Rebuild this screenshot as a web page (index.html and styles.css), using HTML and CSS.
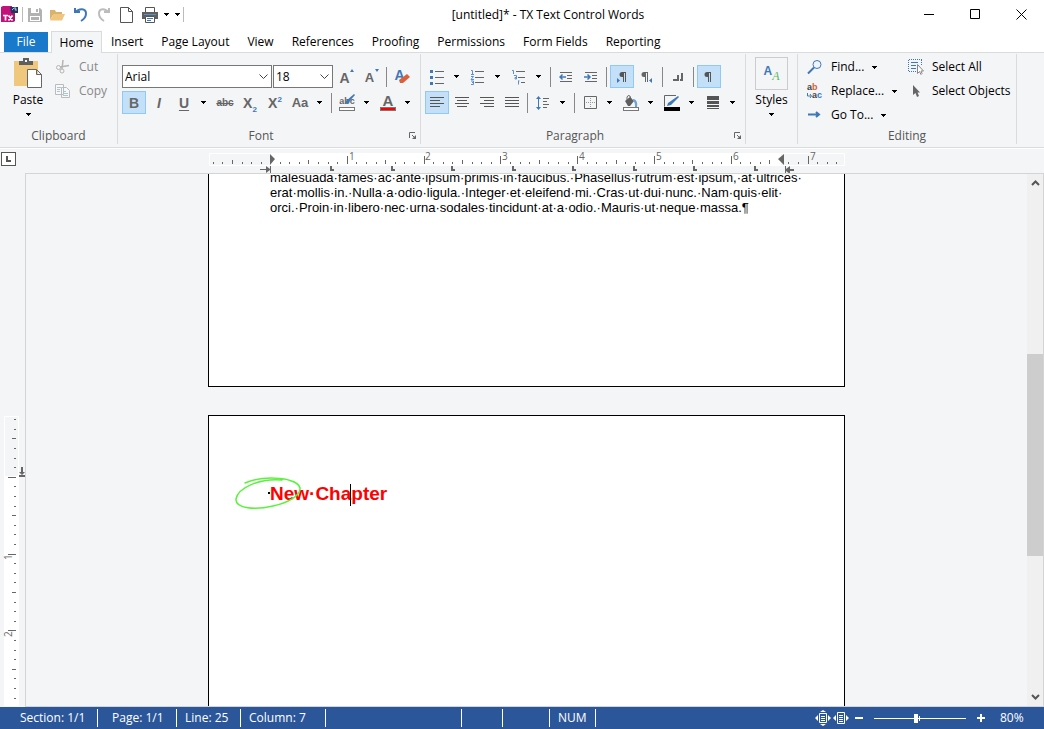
FILE: index.html
```
<!DOCTYPE html>
<html lang="en">
<head>
    <meta charset="UTF-8">
    <title>[untitled]* - TX Text Control Words</title>
    <link rel="stylesheet" href="styles.css">
</head>
<body>
<svg class="defs" aria-hidden="true">
    <symbol id="arrow" viewBox="0 0 5 3"><path d="M0 0h5v1h-1v1h-1v1h-1v-1h-1v-1h-1z"/></symbol>
    <symbol id="chevron" viewBox="0 0 9 6"><path d="M.5 .5l4 4 4-4" fill="none" stroke="#444"/></symbol>
    <symbol id="launcher" viewBox="0 0 8 8"><path d="M.5 6V.5H6M3 3l3 3" fill="none" stroke="#666"/><path d="M7 3v4H3z" fill="#666"/></symbol>
    <symbol id="tabstop" viewBox="0 0 4 5"><path d="M0 0h2v3h2v2H0z" fill="#666"/></symbol>
</svg>

<header class="titlebar">
    <div class="quick">
        <svg class="logo" width="17" height="17" viewBox="0 0 17 17">
            <path d="M0 1l2-1h9v6h3v9l-2 1H0z" fill="#c5117c"/><path d="M11 6l3 0v9l-3 1z" fill="#9b1c66"/>
            <path d="M9 1h8v6h-7z" fill="#23355c"/><path d="M11 4l2-2h2l-1 2h2" fill="none" stroke="#9ec3e8"/>
            <path d="M2 9.500h5M4.500 9.500v5M7.500 9.500l4 5M11.500 9.500l-4 5" stroke="#fff" stroke-width="1.700" fill="none"/>
        </svg>
        <span class="vline"></span>
        <button class="qbtn" aria-label="Save"><svg width="14" height="14" viewBox="0 0 14 14"><path d="M0 0h12l2 2v12H0z" fill="#b2b2b2"/><path d="M3 0h8v5H3zM2 8h10v5H2z" fill="#fff"/><path d="M8 1h2v3H8zM3 9h8v3H3z" fill="#b2b2b2"/></svg></button>
        <button class="qbtn" aria-label="Open"><svg width="15" height="12" viewBox="0 0 15 12"><path d="M0 1h5l1 2h6v3H3l-3 5z" fill="#d9b36c"/><path d="M3.500 5H15l-3 6.500H0z" fill="#f0c67e"/></svg></button>
        <button class="qbtn" aria-label="Undo"><svg width="14" height="15" viewBox="0 0 14 15"><path d="M1 5.500C5 1 12 1 12 6.500c0 4-2.500 6-5 7.500" fill="none" stroke="#3f78b8" stroke-width="2"/><path d="M0 1h2v3h4v2H0z" fill="#3f78b8"/></svg></button>
        <button class="qbtn" aria-label="Redo"><svg width="14" height="15" viewBox="0 0 14 15"><path d="M12 5.500C8 1 2 1 2 6.500c0 4 2.500 6 5 7.500" fill="none" stroke="#bcbcbc" stroke-width="2"/><path d="M13 1h-2v3H7v2h6z" fill="#bcbcbc"/></svg></button>
        <button class="qbtn" aria-label="New"><svg width="13" height="16" viewBox="0 0 13 16"><path d="M.5 .5h8l4 4v11H.5zM8.500 .5v4h4" fill="#fff" stroke="#555"/></svg></button>
        <button class="qbtn" aria-label="Print"><svg width="16" height="16" viewBox="0 0 16 16"><path d="M3.500 5V.5h9V5" fill="#fff" stroke="#555"/><path d="M0 5h16v7H0z" fill="#606060"/><path d="M2 7h12v1H2z" fill="#5c90c8"/><path d="M3.500 9.500h9v6h-9z" fill="#fff" stroke="#555"/><path d="M5 11.500h6M5 13.500h4" stroke="#3f78b8"/></svg></button>
        <button class="drop narrow" aria-label="Print options"><svg class="arrow"><use href="#arrow"/></svg></button>
        <button class="drop narrow" aria-label="Customize toolbar"><svg class="arrow"><use href="#arrow"/></svg></button>
        <span class="vline"></span>
    </div>
    <h1 class="title">[untitled]* - TX Text Control Words</h1>
    <div class="window-buttons">
        <button aria-label="Minimize"><svg width="11" height="11"><path d="M0 5.500h10" stroke="#000"/></svg></button>
        <button aria-label="Maximize"><svg width="11" height="11"><path d="M.5 .5h9v9h-9z" fill="none" stroke="#000"/></svg></button>
        <button aria-label="Close"><svg width="11" height="11"><path d="M.5 .5l10 10M10.500 .5l-10 10" stroke="#000"/></svg></button>
    </div>
</header>

<nav class="tabs">
    <button class="tab file">File</button>
    <button class="tab active">Home</button>
    <button class="tab">Insert</button>
    <button class="tab">Page Layout</button>
    <button class="tab">View</button>
    <button class="tab">References</button>
    <button class="tab">Proofing</button>
    <button class="tab">Permissions</button>
    <button class="tab">Form Fields</button>
    <button class="tab">Reporting</button>
</nav>

<div class="ribbon">
    <section class="group clipboard">
        <div class="group-body">
            <button class="big">
                <svg width="28" height="30" viewBox="0 0 28 30"><path d="M0 3h24v25H0z" fill="#efc77d"/><path d="M5 3h4V0h6v3h4v4H5z" fill="#5f5f5f"/><path d="M11 2h2v2h-2z" fill="#f4f5f7"/><path d="M13.500 11.500h9l5 5v13h-14zM22.500 11.500v5h5" fill="#fff" stroke="#666"/></svg>
                Paste
                <svg class="arrow"><use href="#arrow"/></svg>
            </button>
            <div class="stack">
                <button class="item off"><svg width="16" height="16" viewBox="0 0 16 16"><path d="M8 1l-1 9M14 6.500L5 8" stroke="#b4b4b4" stroke-width="1.500"/><circle cx="3.500" cy="8.500" r="2" fill="none" stroke="#b4b4b4"/><circle cx="7" cy="12" r="2" fill="none" stroke="#b4b4b4"/></svg>Cut</button>
                <button class="item off"><svg width="16" height="16" viewBox="0 0 16 16"><path d="M.5 1.500h8v10h-8zM6.500 4.500h5l3 3v7h-8z" fill="#f8f8f8" stroke="#bbb"/><path d="M2 4.500h4M2 6.500h3M2 8.500h3M8 8.500h3M8 10.500h5M8 12.500h5" stroke="#a9c4dd"/></svg>Copy</button>
            </div>
        </div>
        <div class="group-name">Clipboard</div>
    </section>

    <section class="group font">
        <div class="group-body rows">
            <div class="row">
                <span class="combo family"><select aria-label="Font"><option>Arial</option></select><svg class="chevron"><use href="#chevron"/></svg></span>
                <span class="combo size"><select aria-label="Font size"><option>18</option></select><svg class="chevron"><use href="#chevron"/></svg></span>
                <button class="tool" aria-label="Grow font"><span class="glyph grow">A</span><svg class="caret-mark" viewBox="0 0 4 3"><path d="M2 0l2 3H0z" fill="#3f78b8"/></svg></button>
                <button class="tool" aria-label="Shrink font"><span class="glyph small grow">A</span><svg class="caret-mark" viewBox="0 0 4 3"><path d="M0 0h4L2 3z" fill="#3f78b8"/></svg></button>
                <span class="sep"></span>
                <button class="tool" aria-label="Clear formatting"><span class="glyph blue">A</span><svg class="eraser" viewBox="0 0 11 10"><path d="M8 0l3 3-7 6H1L0 6z" fill="#d9603b"/></svg></button>
            </div>
            <div class="row">
                <button class="tool on" aria-label="Bold"><span class="glyph">B</span></button>
                <button class="tool" aria-label="Italic"><span class="glyph italic">I</span></button>
                <button class="tool" aria-label="Underline"><span class="glyph under">U</span></button>
                <button class="drop" aria-label="Underline style"><svg class="arrow"><use href="#arrow"/></svg></button>
                <button class="tool" aria-label="Strikethrough"><span class="glyph strike">abc</span></button>
                <button class="tool" aria-label="Subscript"><span class="glyph">X<sub>2</sub></span></button>
                <button class="tool" aria-label="Superscript"><span class="glyph">X<sup>2</sup></span></button>
                <button class="tool" aria-label="Change case"><span class="glyph small">Aa</span></button>
                <button class="drop" aria-label="Case options"><svg class="arrow"><use href="#arrow"/></svg></button>
                <span class="sep"></span>
                <button class="tool column" aria-label="Highlight"><span class="glyph tiny">abc</span><svg class="pen" viewBox="0 0 11 11"><path d="M1 10l1-3 8-7 1 1-7 8z" fill="#3f78b8"/></svg><span class="swatch"></span></button>
                <button class="drop" aria-label="Highlight color"><svg class="arrow"><use href="#arrow"/></svg></button>
                <button class="tool column" aria-label="Font color"><span class="glyph over">A</span><span class="swatch red"></span></button>
                <button class="drop" aria-label="Pick font color"><svg class="arrow"><use href="#arrow"/></svg></button>
            </div>
        </div>
        <div class="group-name">Font<button class="launch" aria-label="Font dialog"><svg width="8" height="8"><use href="#launcher"/></svg></button></div>
    </section>

    <section class="group paragraph">
        <div class="group-body rows">
            <div class="row">
                <button class="tool" aria-label="Bullets"><svg width="16" height="16" viewBox="0 0 16 16"><path d="M6 2.500h9M6 8.500h9M6 14.500h9" stroke="#666"/><path d="M1 1h3v3H1zM1 7h3v3H1zM1 13h3v3H1z" fill="#3f78b8"/></svg></button>
                <button class="drop" aria-label="Bullet styles"><svg class="arrow"><use href="#arrow"/></svg></button>
                <button class="tool" aria-label="Numbering"><svg width="16" height="16" viewBox="0 0 16 16"><path d="M5 2.500h9M5 8.500h9M5 13.500h9" stroke="#666"/><path d="M1 1.500h1.500V5M1 5.500h3M1 7.500h2.500L1 10.500h3M1 12h2.500v3.500H1M2 13.500h2" fill="none" stroke="#5c90c8"/></svg></button>
                <button class="drop" aria-label="Numbering styles"><svg class="arrow"><use href="#arrow"/></svg></button>
                <button class="tool" aria-label="Multilevel list"><svg width="16" height="16" viewBox="0 0 16 16"><path d="M5 2.500h9M7 8.500h7M10 13.500h4" stroke="#666"/><path d="M1 1.500h1.500V5M3 6.500h2.500V10H4V8.500h2M7.500 11.500v4M7.500 12h1" fill="none" stroke="#5c90c8"/></svg></button>
                <button class="drop" aria-label="Multilevel styles"><svg class="arrow"><use href="#arrow"/></svg></button>
                <span class="sep"></span>
                <button class="tool" aria-label="Decrease indent"><svg width="14" height="14" viewBox="0 0 14 14"><path d="M1 2.500h12M8 5.500h5M8 8.500h5M1 11.500h12" stroke="#666"/><path d="M1 7h6M3.500 4.500L1 7l2.500 2.500" fill="none" stroke="#3f78b8" stroke-width="1.500"/></svg></button>
                <button class="tool" aria-label="Increase indent"><svg width="14" height="14" viewBox="0 0 14 14"><path d="M1 2.500h12M8 5.500h5M8 8.500h5M1 11.500h12" stroke="#666"/><path d="M0 7h6M3.500 4.500L6 7 3.500 9.500" fill="none" stroke="#3f78b8" stroke-width="1.500"/></svg></button>
                <span class="sep"></span>
                <button class="tool on" aria-label="Left to right"><svg width="12" height="12" viewBox="0 0 12 12"><path d="M9 1H6a2.500 2.500 0 000 5h1v5h1V2h1v9h1V1z" fill="#555"/><path d="M1 7v5l3-2.500z" fill="#3f78b8"/></svg></button>
                <button class="tool" aria-label="Right to left"><svg width="12" height="12" viewBox="0 0 12 12"><path d="M6 1H3a2.500 2.500 0 000 5h1v5h1V2h1v9h1V1z" fill="#666"/><path d="M11 7v5L8 9.500z" fill="#3f78b8"/></svg></button>
                <span class="sep"></span>
                <button class="tool" aria-label="Tabs"><svg width="12" height="12" viewBox="0 0 12 12"><path d="M1 8h4V4h2v6H1zM9 2h2v8H8V8h1z" fill="#666"/></svg></button>
                <span class="sep"></span>
                <button class="tool on" aria-label="Show control characters"><svg width="12" height="12" viewBox="0 0 12 12"><path d="M7 1H4a2.500 2.500 0 000 5h1v5h1V2h1v9h1V1z" fill="#555"/></svg></button>
            </div>
            <div class="row">
                <button class="tool on" aria-label="Align left"><svg width="14" height="11" viewBox="0 0 14 11"><path d="M0 .5h14M0 3.500h10M0 6.500h14M0 9.500h10" stroke="#555"/></svg></button>
                <button class="tool" aria-label="Center"><svg width="14" height="11" viewBox="0 0 14 11"><path d="M0 .5h14M2 3.500h10M0 6.500h14M2 9.500h10" stroke="#555"/></svg></button>
                <button class="tool" aria-label="Align right"><svg width="14" height="11" viewBox="0 0 14 11"><path d="M0 .5h14M4 3.500h10M0 6.500h14M4 9.500h10" stroke="#555"/></svg></button>
                <button class="tool" aria-label="Justify"><svg width="14" height="11" viewBox="0 0 14 11"><path d="M0 .5h14M0 3.500h14M0 6.500h14M0 9.500h14" stroke="#555"/></svg></button>
                <span class="sep"></span>
                <button class="tool" aria-label="Line spacing"><svg width="14" height="14" viewBox="0 0 14 14"><path d="M7 2.500h6M7 5.500h4M7 8.500h6M7 11.500h4" stroke="#666"/><path d="M2.500 2v10" stroke="#3f78b8"/><path d="M0 3l2.500-3L5 3zM0 11l2.500 3L5 11z" fill="#3f78b8"/></svg></button>
                <button class="drop" aria-label="Spacing options"><svg class="arrow"><use href="#arrow"/></svg></button>
                <span class="sep"></span>
                <button class="tool" aria-label="Borders"><svg width="13" height="13" viewBox="0 0 13 13"><path d="M.5 .5h12v12H.5z" fill="none" stroke="#666"/><path d="M2 6.500h9M6.500 2v9" stroke="#999" stroke-dasharray="1 1"/></svg></button>
                <button class="drop" aria-label="Border options"><svg class="arrow"><use href="#arrow"/></svg></button>
                <button class="tool column" aria-label="Shading"><svg width="14" height="12" viewBox="0 0 14 12"><path d="M1 6l5-4 4 4-4 5H4z" fill="#5f5f5f"/><path d="M3 5V2a2 2 0 013-1l1 3" fill="none" stroke="#666"/><path d="M9 4c3 0 5 3 4 8h-2c0-3 0-5-2-6z" fill="#6fa3d6"/></svg><span class="swatch"></span></button>
                <button class="drop" aria-label="Shading color"><svg class="arrow"><use href="#arrow"/></svg></button>
                <button class="tool column" aria-label="Frame line"><svg width="16" height="12" viewBox="0 0 16 12"><path d="M12 .5H.5V11.500" fill="none" stroke="#666"/><path d="M3 11l1-3 10-7 1 1-8 8z" fill="#3f78b8"/></svg><span class="swatch black"></span></button>
                <button class="drop" aria-label="Frame line color"><svg class="arrow"><use href="#arrow"/></svg></button>
                <button class="tool" aria-label="Line width"><svg width="12" height="13" viewBox="0 0 12 13"><path d="M0 0h12v4H0zM0 5h12v3H0zM0 9h12v2H0zM0 12h12v1H0z" fill="#555"/></svg></button>
                <button class="drop" aria-label="Line width options"><svg class="arrow"><use href="#arrow"/></svg></button>
            </div>
        </div>
        <div class="group-name">Paragraph<button class="launch" aria-label="Paragraph dialog"><svg width="8" height="8"><use href="#launcher"/></svg></button></div>
    </section>

    <section class="group styles">
        <div class="group-body">
            <button class="big">
                <span class="style-box"><b>A</b><i>A</i></span>
                Styles
                <svg class="arrow"><use href="#arrow"/></svg>
            </button>
        </div>
    </section>

    <section class="group editing">
        <div class="group-body">
            <div class="stack">
                <button class="item"><svg width="16" height="16" viewBox="0 0 16 16"><circle cx="10" cy="5.500" r="4" fill="#eef5fb" stroke="#3f78b8"/><path d="M7 8.500L1 14.500" stroke="#3f78b8" stroke-width="2"/></svg>Find...<svg class="arrow"><use href="#arrow"/></svg></button>
                <button class="item"><span class="replace-icon"><span>a<b>b</b></span><span><svg width="5" height="5" viewBox="0 0 5 5"><path d="M.5 0v3H4M3 1l1.500 2L3 5" fill="none" stroke="#3f78b8"/></svg>a<i>c</i></span></span>Replace...<svg class="arrow"><use href="#arrow"/></svg></button>
                <button class="item"><svg width="16" height="16" viewBox="0 0 16 16"><path d="M1 7.500h10M9 5l3 2.500L9 10" fill="none" stroke="#3f78b8" stroke-width="2"/></svg>Go To...<svg class="arrow"><use href="#arrow"/></svg></button>
            </div>
            <div class="stack">
                <button class="item"><svg width="16" height="16" viewBox="0 0 16 16"><path d="M.5 1v11M1 .5h13M13.500 1v5M1 12.500h8" stroke="#3f78b8" stroke-dasharray="1 1"/><path d="M3 3.500h7M3 6.500h5M3 9.500h5" stroke="#3f78b8"/><path d="M9.500 5.500v9l2-2 1.500 3 1-1-1-2.500h2.500z" fill="#fff" stroke="#888"/></svg>Select All</button>
                <button class="item"><svg width="16" height="16" viewBox="0 0 16 16"><path d="M5 2v10l2.500-2 1.500 4 2-1-1.500-3.500H12z" fill="#666"/></svg>Select Objects</button>
            </div>
        </div>
        <div class="group-name">Editing</div>
    </section>
</div>

<div class="ruler-bar">
    <button class="tab-kind" aria-label="Tab type"><svg width="5" height="6" viewBox="0 0 5 6"><path d="M0 0h2v4h3v2H0z" fill="#555"/></svg></button>
    <div class="ruler-track">
        <svg class="ruler" width="637" height="24" viewBox="208 149 637 24">
            <path d="M209.500 153.500h635v12h-635z" fill="#f4f5f7" stroke="#fff"/>
            <path d="M270 153h511v13H270z" fill="#fff"/>
            <path class="tick" d="M213 162v2M222 162v2M242 162v2M251 162v2M261 162v2M280 162v2M289 162v2M299 162v2M318 162v2M328 162v2M337 162v2M356 162v2M366 162v2M376 162v2M395 162v2M404 162v2M414 162v2M433 162v2M443 162v2M452 162v2M472 162v2M481 162v2M491 162v2M510 162v2M520 162v2M529 162v2M548 162v2M558 162v2M568 162v2M587 162v2M596 162v2M606 162v2M625 162v2M635 162v2M644 162v2M664 162v2M673 162v2M683 162v2M702 162v2M712 162v2M721 162v2M740 162v2M750 162v2M760 162v2M788 162v2M798 162v2M817 162v2M827 162v2M836 162v2"/>
            <path class="tick" d="M232 160v4M308 160v4M385 160v4M462 160v4M539 160v4M616 160v4M692 160v4M769 160v4"/>
            <path class="tick" d="M347 156v8M424 156v8M500 156v8M577 156v8M654 156v8M731 156v8M808 156v8"/>
            <g class="num"><text x="349" y="160">1</text><text x="425" y="160">2</text><text x="502" y="160">3</text><text x="579" y="160">4</text><text x="656" y="160">5</text><text x="733" y="160">6</text><text x="810" y="160">7</text></g>
            <path d="M270 154l5 5-5 6zM784 154l-6 5 6 6z" fill="#666"/>
            <path d="M260 169h6v-3l4 3v-3h1v7h-1v-3l-4 3v-3h-6zM785 166h1v3l4-3v3h4v2h-4v3l-4-3v3h-1z" fill="#666"/>
            <g><use href="#tabstop" x="330" y="166" width="4" height="5"/><use href="#tabstop" x="391" y="166" width="4" height="5"/><use href="#tabstop" x="451" y="166" width="4" height="5"/><use href="#tabstop" x="512" y="166" width="4" height="5"/><use href="#tabstop" x="572" y="166" width="4" height="5"/><use href="#tabstop" x="633" y="166" width="4" height="5"/><use href="#tabstop" x="693" y="166" width="4" height="5"/><use href="#tabstop" x="754" y="166" width="4" height="5"/></g>
        </svg>
    </div>
</div>

<main class="workspace">
    <div class="side-ruler">
        <svg width="25" height="290" viewBox="0 416 25 290">
            <path d="M4.500 416.500h14v289h-14z" fill="#fff" stroke="#fff"/>
            <path d="M5 417h13v59H5z" fill="#f4f5f7"/>
            <path class="tick" d="M14 419.500h2M14 429.500h2M14 448.500h2M14 458.500h2M14 467.500h2M14 486.500h2M14 496.500h2M14 506.500h2M14 525.500h2M14 534.500h2M14 544.500h2M14 563.500h2M14 573.500h2M14 582.500h2M14 602.500h2M14 611.500h2M14 621.500h2M14 640.500h2M14 650.500h2M14 659.500h2M14 678.500h2M14 688.500h2M14 698.500h2"/>
            <path class="tick" d="M12 438.500h4M12 515.500h4M12 592.500h4M12 669.500h4M8 477.500h8M8 554.500h8M8 630.500h8"/>
            <g class="num"><text transform="translate(12 560) rotate(-90)">1</text><text transform="translate(12 637) rotate(-90)">2</text></g>
            <path d="M21 467h2v5h2l-3 3-3-3h2zM19 475h6v2h-6z" fill="#666"/>
        </svg>
    </div>
    <div class="editor">
        <div class="pages">
            <article class="page first">
                <p>malesuada·fames·ac·ante·ipsum·primis·in·faucibus.·Phasellus·rutrum·est·ipsum,·at·ultrices·<br>erat·mollis·in.·Nulla·a·odio·ligula.·Integer·et·eleifend·mi.·Cras·ut·dui·nunc.·Nam·quis·elit·<br>orci.·Proin·in·libero·nec·urna·sodales·tincidunt·at·a·odio.·Mauris·ut·neque·massa.¶</p>
            </article>
            <article class="page second">
                <h2>New·Cha<span class="cursor"></span>pter
                    <svg class="scribble" width="70" height="36" viewBox="0 0 70 36"><path d="M48 4C25 2 4 12 2 23c-1 10 20 11 37 7 14-3 28-10 27-18C64 2 32-2 11 7" fill="none" stroke="#5af23c" stroke-width="1.500" stroke-linecap="round"/><path d="M34 16h2v2h-2z"/></svg>
                </h2>
            </article>
        </div>
        <div class="scrollbar">
            <button aria-label="Scroll up"><svg width="9" height="6" viewBox="0 0 9 6"><path d="M1 5l3.500-3.500L8 5" fill="none" stroke="#555" stroke-width="2"/></svg></button>
            <div class="thumb"></div>
            <button class="down" aria-label="Scroll down"><svg width="9" height="6" viewBox="0 0 9 6"><path d="M1 1l3.500 3.500L8 1" fill="none" stroke="#555" stroke-width="2"/></svg></button>
        </div>
    </div>
</main>

<footer class="statusbar">
    <span class="cell section">Section: 1/1</span>
    <span class="cell page-no">Page: 1/1</span>
    <span class="cell line-no">Line: 25</span>
    <span class="cell col-no">Column: 7</span>
    <span class="cell blank"></span>
    <span class="cell ins"></span>
    <span class="cell caps"></span>
    <span class="cell num-lock">NUM</span>
    <div class="zoom">
        <button aria-label="Fit page"><svg width="16" height="16" viewBox="0 0 16 16"><path d="M4.500 3.500h7v9h-7z" fill="none" stroke="#fff"/><path d="M6 6.500h4M6 8.500h4M6 10.500h4" stroke="#fff"/><path d="M8 0l3 2H5zM8 16l3-2H5zM0 8l3-3v6zM16 8l-3-3v6z" fill="#fff"/></svg></button>
        <button aria-label="Fit width"><svg width="16" height="16" viewBox="0 0 16 16"><path d="M4.500 2.500h7v11h-7z" fill="none" stroke="#fff"/><path d="M6 5.500h4M6 7.500h4M6 9.500h4M6 11.500h4" stroke="#fff"/><path d="M0 8l3-3v6zM16 8l-3-3v6z" fill="#fff"/></svg></button>
        <button aria-label="Zoom out"><svg width="8" height="8"><path d="M0 3h8v2H0z" fill="#fff"/></svg></button>
        <input type="range" min="0" max="100" value="45" aria-label="Zoom">
        <button aria-label="Zoom in"><svg width="8" height="8"><path d="M0 3h3V0h2v3h3v2H5v3H3V5H0z" fill="#fff"/></svg></button>
        <output>80%</output>
    </div>
</footer>
</body>
</html>
```
FILE: styles.css
```
* {
    box-sizing: border-box;
}

body {
    margin: 0;
    height: 100vh;
    display: flex;
    flex-direction: column;
    overflow: hidden;
    background: #fff;
    color: #000;
    font: 12px/16px "Open Sans", "Noto Sans", sans-serif;
}

button {
    margin: 0;
    padding: 0;
    border: 0;
    background: none;
    color: inherit;
    font: inherit;
}

svg {
    display: block;
    flex: none;
}

.defs {
    position: absolute;
    width: 0;
    height: 0;
}

.arrow {
    width: 5px;
    height: 3px;
}

/* title bar */
.titlebar {
    display: grid;
    grid-template-columns: 1fr auto 1fr;
    align-items: center;
    height: 29px;
    flex: none;
}

.quick {
    display: flex;
    align-items: center;
}

.quick .logo {
    margin: 0 4px 0 1px;
}

.qbtn {
    width: 23px;
    height: 22px;
    display: flex;
    align-items: center;
    justify-content: center;
}

.vline {
    width: 1px;
    height: 15px;
    background: #bbb;
}

.title {
    margin: 0;
    padding-left: 52px;
    font-size: 12px;
    font-weight: normal;
}

.window-buttons {
    display: flex;
    justify-content: flex-end;
}

.window-buttons button {
    width: 46px;
    height: 29px;
    display: flex;
    align-items: center;
    justify-content: center;
}

/* tabs */
.tabs {
    display: flex;
    align-items: flex-end;
    height: 24px;
    padding-left: 4px;
    border-bottom: 1px solid #dadbdc;
    flex: none;
}

.tab {
    height: 20px;
    padding: 0 9px;
    white-space: nowrap;
}

.tab.file {
    width: 44px;
    margin-right: 3px;
    background: #1979ca;
    color: #fff;
}

.tab.active {
    height: 22px;
    width: 51px;
    padding: 0;
    margin-bottom: -1px;
    border: 1px solid #dadbdc;
    border-bottom: 0;
    background: #f4f5f7;
}

/* ribbon */
.ribbon {
    display: flex;
    height: 95px;
    background: #f4f5f7;
    border-bottom: 1px solid #dadbdc;
    flex: none;
}

.group {
    display: flex;
    flex-direction: column;
    justify-content: space-between;
    margin: 1px 0 3px;
    padding: 0 4px;
    border-right: 1px solid #dadbdc;
}

.clipboard {
    width: 118px;
}

.font {
    width: 303px;
}

.paragraph {
    width: 325px;
}

.styles {
    width: 52px;
}

.editing {
    width: 219px;
}

.group-body {
    display: flex;
}

.group-body.rows {
    flex-direction: column;
    gap: 3px;
    padding-top: 11px;
}

.group-name {
    position: relative;
    text-align: center;
    color: #555;
}

.font .group-name,
.paragraph .group-name {
    padding-right: 16px;
}

.launch {
    position: absolute;
    right: -1px;
    bottom: 4px;
}

.row {
    display: flex;
    align-items: center;
    gap: 1px;
    height: 23px;
}

.tool {
    position: relative;
    width: 24px;
    height: 23px;
    display: flex;
    align-items: center;
    justify-content: center;
}

.tool.column {
    flex-direction: column;
}

.tool.on {
    background: #c4e0f8;
    border: 1px solid #90c8f6;
}

.drop {
    width: 15px;
    height: 23px;
    padding-right: 2px;
    display: flex;
    align-items: center;
    justify-content: center;
}

.drop.narrow {
    width: 11px;
    padding: 0;
}

.sep {
    width: 1px;
    height: 20px;
    margin: 0 2px;
    background: #888;
}

.combo {
    position: relative;
    height: 23px;
}

.family {
    width: 150px;
}

.size {
    width: 60px;
}

.combo select {
    width: 100%;
    height: 23px;
    padding: 0 2px;
    appearance: none;
    border: 1px solid #777;
    border-radius: 0;
    background: #fff;
    color: #000;
    font: inherit;
}

.chevron {
    position: absolute;
    right: 4px;
    top: 9px;
    width: 9px;
    height: 6px;
    pointer-events: none;
}

.glyph {
    color: #666;
    font: bold 14px/14px "Liberation Sans", Arial, sans-serif;
}

.glyph.small {
    font-size: 13px;
}

.glyph.grow {
    padding: 2px 3px 0 0;
}

.glyph.italic {
    font-style: italic;
}

.glyph.under {
    text-decoration: underline;
    text-underline-offset: 2px;
}

.glyph.strike {
    font-size: 10px;
    text-decoration: line-through;
}

.glyph.tiny {
    font-size: 9px;
    line-height: 12px;
}

.glyph.over {
    font-size: 15px;
    line-height: 13px;
}

.glyph.blue {
    color: #3f78b8;
    padding: 0 5px 3px 0;
}

.glyph sub,
.glyph sup {
    color: #3f78b8;
    font-size: 8px;
    line-height: 0;
}

.caret-mark {
    position: absolute;
    right: 4px;
    top: 4px;
    width: 4px;
    height: 3px;
}

.eraser {
    position: absolute;
    right: 4px;
    bottom: 4px;
    width: 11px;
    height: 10px;
}

.pen {
    position: absolute;
    right: 4px;
    top: 3px;
    width: 11px;
    height: 11px;
}

.swatch {
    width: 16px;
    height: 4px;
    border: 1px solid #777;
    background: #fff;
}

.swatch.red {
    background: #f00;
}

.swatch.black {
    background: #000;
    border-color: #000;
}

.big {
    display: flex;
    flex-direction: column;
    align-items: center;
    width: 48px;
    padding-top: 4px;
}

.big svg:first-child {
    margin-bottom: 4px;
}

.big .arrow {
    margin-top: 5px;
}

.stack {
    display: flex;
    flex-direction: column;
    padding-top: 1px;
}

.item {
    display: flex;
    align-items: center;
    gap: 8px;
    height: 24px;
    white-space: nowrap;
}

.item.off {
    color: #888;
}

.clipboard .stack {
    padding-left: 3px;
}

.editing .stack {
    width: 101px;
    padding-left: 5px;
}

.replace-icon {
    width: 16px;
    font: bold 9px/8px "Liberation Sans", Arial, sans-serif;
    color: #444;
    text-align: left;
}

.replace-icon span {
    display: flex;
    align-items: center;
}

.replace-icon b {
    color: #d9603b;
}

.replace-icon i {
    color: #3f78b8;
    font-style: normal;
}

.styles .big {
    width: 43px;
    padding-top: 3px;
}

.style-box {
    display: flex;
    align-items: center;
    justify-content: center;
    width: 33px;
    height: 33px;
    margin-bottom: 2px;
    border: 1px solid #ccc;
    font: 12px/16px "Liberation Sans", Arial, sans-serif;
}

.style-box b {
    padding-bottom: 5px;
    color: #3f78b8;
}

.style-box i {
    padding-top: 4px;
    color: #5cb85c;
    font-family: "Liberation Serif", serif;
}

/* rulers */
.ruler-bar {
    display: flex;
    height: 24px;
    margin-top: 1px;
    background: #f4f5f7;
    flex: none;
}

.tab-kind {
    display: flex;
    align-items: center;
    justify-content: center;
    width: 15px;
    height: 14px;
    margin: 3px 10px 0 1px;
    border: 1px solid #555;
    background: #fff;
}

.ruler-track {
    display: flex;
    justify-content: center;
    flex: 1;
    padding-right: 17px;
}

.tick {
    stroke: #666;
    shape-rendering: crispEdges;
}

.num {
    fill: #666;
    font: 10px "Open Sans", sans-serif;
}

/* document area */
.workspace {
    display: flex;
    flex: 1;
    min-height: 0;
    background: #f4f5f7;
}

.side-ruler {
    display: flex;
    align-items: flex-end;
    width: 25px;
    padding-bottom: 1px;
    overflow: hidden;
}

.editor {
    display: flex;
    flex: 1;
    border: 1px solid #d4d4d4;
    overflow: hidden;
}

.pages {
    display: flex;
    flex-direction: column;
    align-items: center;
    flex: 1;
}

.page {
    width: 637px;
    padding: 0 0 0 61px;
    border: 1px solid #000;
    background: #fff;
    font-family: "Liberation Sans", Arial, sans-serif;
}

.page.first {
    height: 213px;
    border-top: 0;
}

.page p {
    margin: -4px 0 0;
    font-size: 13px;
    line-height: 15px;
    white-space: nowrap;
}

.page.second {
    flex: 1;
    margin-top: 28px;
    padding-top: 66px;
    border-bottom: 0;
}

.page h2 {
    position: relative;
    display: flex;
    margin: 0;
    color: #f00;
    font-size: 19px;
    line-height: 24px;
}

.cursor {
    width: 1px;
    height: 22px;
    margin: 2px 0 0 -1px;
    background: #000;
}

.scribble {
    position: absolute;
    left: -36px;
    top: -6px;
}

.scrollbar {
    display: grid;
    grid-template-rows: 17px 163fr 201fr 133fr 17px;
    width: 16px;
    background: #f0f0f0;
}

.scrollbar button {
    display: flex;
    align-items: center;
    justify-content: center;
}

.scrollbar .thumb {
    grid-row: 3;
    background: #cdcdcd;
}

.scrollbar .down {
    grid-row: 5;
}

/* status bar */
.statusbar {
    display: flex;
    align-items: center;
    height: 22px;
    background: #2b579a;
    color: #fff;
    flex: none;
}

.cell {
    height: 18px;
    padding-left: 8px;
    border-right: 1px solid #fff;
    line-height: 18px;
    white-space: nowrap;
}

.section {
    width: 98px;
    padding-left: 20px;
}

.page-no {
    width: 79px;
    padding-left: 14px;
}

.line-no {
    width: 64px;
}

.col-no {
    width: 85px;
}

.blank {
    width: 136px;
}

.ins {
    width: 41px;
}

.caps {
    width: 47px;
}

.num-lock {
    width: 46px;
}

.zoom {
    display: flex;
    align-items: center;
    gap: 2px;
    margin-left: auto;
    padding-right: 19px;
}

.zoom button {
    display: flex;
    justify-content: center;
    min-width: 16px;
}

.zoom input {
    width: 92px;
    height: 16px;
    margin: 0 5px;
    appearance: none;
    background: linear-gradient(#fff, #fff) 45px 50% / 1px 5px no-repeat, linear-gradient(#fff, #fff) 0 50% / 100% 1px no-repeat;
}

.zoom input::-webkit-slider-thumb {
    appearance: none;
    width: 4px;
    height: 9px;
    background: #fff;
}

.zoom output {
    margin-left: 9px;
    min-width: 25px;
}
```
